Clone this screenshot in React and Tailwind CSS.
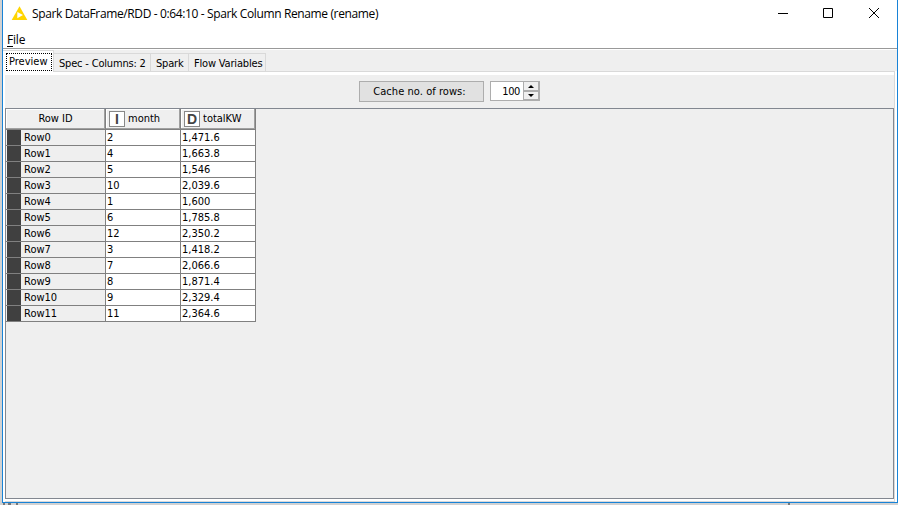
const rows = [
  ['Row0', '2', '1,471.6'],
  ['Row1', '4', '1,663.8'],
  ['Row2', '5', '1,546'],
  ['Row3', '10', '2,039.6'],
  ['Row4', '1', '1,600'],
  ['Row5', '6', '1,785.8'],
  ['Row6', '12', '2,350.2'],
  ['Row7', '3', '1,418.2'],
  ['Row8', '7', '2,066.6'],
  ['Row9', '8', '1,871.4'],
  ['Row10', '9', '2,329.4'],
  ['Row11', '11', '2,364.6'],
];

const tabs = [
  ['Spec - Columns: 2', 'w-[97px]'],
  ['Spark', 'w-[38px]'],
  ['Flow Variables', 'w-[77px]'],
];

function TitleBar() {
  return (
    <div className="flex h-[29px] shrink-0 items-start pl-2">
      <svg className="mt-[6px] shrink-0" width="17" height="15" viewBox="0 0 17 15">
        <path d="M8.5 0.3 16.3 14H0.7Z" fill="#ffd500" />
        <path d="M6.3 6 12 9.1 6.3 12.3Z" fill="#fff" />
      </svg>
      <span className="ml-1 mt-[5px] whitespace-nowrap font-['Open_Sans',sans-serif] text-[12px] leading-[17px] tracking-[-0.37px] [font-stretch:normal]">
        Spark DataFrame/RDD - 0:64:10 - Spark Column Rename (rename)
      </span>
      <svg className="ml-auto mr-[16px] mt-[7px] shrink-0" width="104" height="12" viewBox="0 0 104 12" fill="none" stroke="#000">
        <path d="M1 6.5H11" />
        <path d="M46.5 1.5h9v9h-9z" />
        <path d="M92 1 102 11M102 1 92 11" />
      </svg>
    </div>
  );
}

function Header({ type, label }) {
  return (
    <div className="flex h-[21px] w-[75px] items-center border-b border-r border-[#808080] bg-[#efefef] shadow-[inset_-1px_-1px_0_#a0a0a0,inset_1px_1px_0_#fff]">
      <span className="ml-[3px] flex h-4 w-4 shrink-0 items-center justify-center border border-[#888] bg-white font-['Liberation_Sans',sans-serif] text-[14px] font-bold leading-none text-[#444] [font-stretch:normal]">
        {type}
      </span>
      <span className="-mt-px ml-[3px]">{label}</span>
    </div>
  );
}

export default function App() {
  return (
    <div className="flex h-[505px] w-[898px] flex-col overflow-hidden bg-[#d2d2d2] pl-[2px] font-['DejaVu_Sans_Condensed','DejaVu_Sans',sans-serif] text-[11px] leading-[14px] text-black [font-stretch:condensed]">
      <div className="flex h-[503px] w-[896px] shrink-0 flex-col border border-t-0 border-[#1883d7] bg-white">
        <TitleBar />
        <div className="h-[20px] shrink-0 border-b border-[#999] pl-1 pt-[3px] font-['Open_Sans',sans-serif] text-[12px] leading-[15px] tracking-[-0.2px] [font-stretch:normal]">
          <span className="underline underline-offset-2">F</span>ile
        </div>
        <div className="mt-px flex h-[21px] shrink-0 items-end bg-[#efefef]">
          <div className="relative -mb-px h-[22px] w-[51px] border-r border-t border-[#d9d9d9] bg-white pl-[3px] pt-[2px]">
            <div className="h-[18px] w-[46px] border border-dotted border-black pl-[2px] pt-px leading-[13px]">Preview</div>
          </div>
          <div className="flex h-[18px] grow">
            {tabs.map(([name, width]) => (
              <div key={name} className={`${width} whitespace-nowrap border-r border-t border-[#d9d9d9] pl-[5px] pt-[2px] leading-[15px] tracking-[-0.18px]`}>
                {name}
              </div>
            ))}
          </div>
        </div>
        <div className="ml-[1px] mr-[2px] flex grow flex-col border-r border-t border-[#d9d9d9] pl-px pt-[3px]">
          <div className="flex h-[33px] shrink-0 items-start bg-[#efefef] pl-[354px] pt-[6px]">
            <div className="h-[21px] w-[125px] whitespace-nowrap border border-[#adadad] bg-[#e1e1e1] pr-1 text-center leading-[19px] tracking-[0.05px]">Cache no. of rows:</div>
            <div className="ml-[6px] flex h-[20px] w-[50px] border border-[#adadad] bg-white">
              <span className="w-[29px] text-right leading-[19px] tracking-[-0.4px]">100</span>
              <div className="ml-auto flex w-[16px] flex-col bg-[#efefef]">
                <div className="flex h-[9px] items-center justify-center border border-t-0 border-[#adadad]">
                  <svg width="6" height="3" viewBox="0 0 6 3"><path d="M0 3 3 0 6 3Z" /></svg>
                </div>
                <div className="flex h-[9px] items-center justify-center border border-[#adadad]">
                  <svg width="6" height="3" viewBox="0 0 6 3"><path d="M0 0 3 3 6 0Z" /></svg>
                </div>
              </div>
            </div>
          </div>
          <div className="h-[391px] shrink-0 border border-[#828790] bg-[#efefef]">
            <div className="flex">
              <div className="h-[21px] w-[100px] border-b border-r border-[#808080] pt-[3px] text-center shadow-[inset_-1px_-1px_0_#a0a0a0,inset_1px_1px_0_#fff]">Row ID</div>
              <Header type="I" label="month" />
              <Header type="D" label="totalKW" />
            </div>
            {rows.map(([id, month, total]) => (
              <div key={id} className="flex h-4 w-[250px] whitespace-nowrap leading-[16px]">
                <div className="flex w-[100px] border-b border-r border-[#808080]">
                  <div className="ml-px w-[14px] bg-[#404040]" />
                  <span className="pl-[3px]">{id}</span>
                </div>
                <div className="w-[75px] border-b border-r border-[#808080] bg-white pl-px">{month}</div>
                <div className="w-[75px] border-b border-r border-[#808080] bg-white pl-px">{total}</div>
              </div>
            ))}
          </div>
          <div className="grow border-b border-[#d9d9d9]" />
        </div>
      </div>
      <div className="flex h-[2px] shrink-0">
        <div className="ml-px w-[2px] bg-[#777]" />
        <div className="ml-[3px] w-[3px] bg-[#777]" />
        <div className="ml-[5px] w-[2px] bg-[#777]" />
        <div className="ml-[770px] w-[2px] bg-[#777]" />
      </div>
    </div>
  );
}
